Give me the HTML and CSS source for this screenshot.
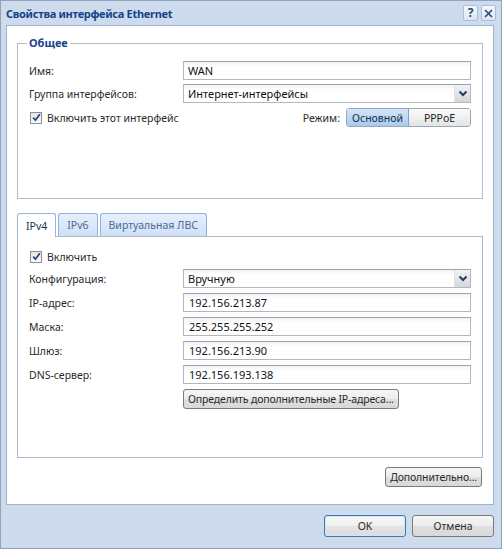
FILE: index.html
```html
<!DOCTYPE html>
<html lang="ru">
<head>
<meta charset="utf-8">
<title>Свойства интерфейса Ethernet</title>
<link rel="stylesheet" href="styles.css">
</head>
<body>
<div class="dialog">
  <div class="titlebar">
    <span class="title">Свойства интерфейса Ethernet</span>
    <div class="tools">
      <span class="tool">?</span>
      <span class="tool"><svg width="11" height="11" viewBox="0 0 11 11"><path d="M2 2 L9 9 M9 2 L2 9" stroke="#2a4a78" stroke-width="1.6" fill="none"/></svg></span>
    </div>
  </div>
  <div class="panel">
    <fieldset class="group">
      <legend>Общее</legend>
      <div class="row">
        <span class="lbl">Имя:</span>
        <div class="field">WAN</div>
      </div>
      <div class="row">
        <span class="lbl">Группа интерфейсов:</span>
        <div class="field select">
          <span class="sel-text">Интернет-интерфейсы</span>
          <span class="arrow"><svg width="10" height="7" viewBox="0 0 10 7"><path d="M1.5 1.5 L5 5 L8.5 1.5" stroke="#1f3d6e" stroke-width="2" fill="none"/></svg></span>
        </div>
      </div>
      <div class="row row-mode">
        <span class="check"><svg width="9" height="9" viewBox="0 0 9 9"><path d="M1.2 4.6 L3.5 7.2 L7.8 1.2" stroke="#24427a" stroke-width="1.7" fill="none"/></svg></span>
        <span class="check-lbl">Включить этот интерфейс</span>
        <span class="mode-lbl">Режим:</span>
        <div class="seg">
          <span class="seg-btn active">Основной</span>
          <span class="seg-btn">PPPoE</span>
        </div>
      </div>
    </fieldset>

    <div class="tabs">
      <div class="tabstrip">
        <span class="tab active">IPv4</span>
        <span class="tab">IPv6</span>
        <span class="tab">Виртуальная ЛВС</span>
      </div>
      <div class="tabpanel">
        <div class="row">
          <span class="check"><svg width="9" height="9" viewBox="0 0 9 9"><path d="M1.2 4.6 L3.5 7.2 L7.8 1.2" stroke="#24427a" stroke-width="1.7" fill="none"/></svg></span>
          <span class="check-lbl">Включить</span>
        </div>
        <div class="row r-sel">
          <span class="lbl">Конфигурация:</span>
          <div class="field select">
            <span class="sel-text">Вручную</span>
            <span class="arrow"><svg width="10" height="7" viewBox="0 0 10 7"><path d="M1.5 1.5 L5 5 L8.5 1.5" stroke="#1f3d6e" stroke-width="2" fill="none"/></svg></span>
          </div>
        </div>
        <div class="row r-in">
          <span class="lbl">IP-адрес:</span>
          <div class="field ip">192.156.213.87</div>
        </div>
        <div class="row r-in">
          <span class="lbl">Маска:</span>
          <div class="field ip">255.255.255.252</div>
        </div>
        <div class="row r-in">
          <span class="lbl">Шлюз:</span>
          <div class="field ip">192.156.213.90</div>
        </div>
        <div class="row r-in">
          <span class="lbl">DNS-сервер:</span>
          <div class="field ip">192.156.193.138</div>
        </div>
        <div class="row r-btn">
          <span class="lbl"></span>
          <button class="btn btn-extra">Определить дополнительные IP-адреса...</button>
        </div>
      </div>
    </div>

    <div class="more-row">
      <button class="btn btn-more">Дополнительно...</button>
    </div>
  </div>
  <div class="footer">
    <button class="btn btn-foot ok">OK</button>
    <button class="btn btn-foot">Отмена</button>
  </div>
</div>
</body>
</html>
```

FILE: styles.css
```css
* { box-sizing: border-box; }

html, body {
  margin: 0;
  padding: 0;
  background: #cddbec;
}

body {
  font-family: "Noto Sans", "Open Sans", sans-serif;
  font-size: 10.5px;
  color: #2a2a2a;
}

.dialog {
  width: 502px;
  height: 549px;
  background: #cddbec;
  border: 1px solid #8fa3bd;
  display: flex;
  flex-direction: column;
}

.titlebar {
  height: 24px;
  display: flex;
  align-items: center;
  padding: 0 5px 0 5px;
}

.title {
  flex: 1;
  font-weight: bold;
  font-size: 11px;
  color: #15428b;
  letter-spacing: -0.3px;
}

.tools {
  display: flex;
  gap: 3px;
}

.tool {
  width: 15px;
  height: 16px;
  border: 1px solid #a9bfd9;
  border-radius: 2px;
  background: linear-gradient(#f5f8fc, #dbe6f3);
  color: #2a4a78;
  font-weight: bold;
  font-size: 12px;
  line-height: 14px;
  text-align: center;
  display: flex;
  align-items: center;
  justify-content: center;
}

.panel {
  margin-left: 5px;
  width: 488px;
  height: 480px;
  background: #fff;
  border: 1px solid #99b4d4;
  padding: 0 10px;
}

.group {
  margin: 9px 0 0 0;
  width: 466px;
  border: 1px solid #b7bbc6;
  padding: 10px 11px 71px 10px;
}

.group legend {
  font-weight: bold;
  font-size: 11px;
  line-height: 16px;
  color: #15428b;
  padding: 0 2px;
  margin-left: -1px;
}

.row {
  display: flex;
  align-items: center;
  height: 19px;
  margin-top: 4px;
  padding-left: 1px;
}

.row:first-of-type { margin-top: 0; }

.lbl {
  width: 154px;
  flex: none;
}

.field {
  flex: 1;
  height: 19px;
  border: 1px solid #b3b7bf;
  border-top-color: #9ea2aa;
  background: linear-gradient(#f3f3f3, #ffffff 5px);
  padding: 0 4px;
  display: flex;
  align-items: center;
  font-size: 11px;
  color: #111;
}

.field.ip { padding-left: 5px; }

.select {
  padding-right: 0;
}

.sel-text { flex: 1; }

.arrow {
  width: 16px;
  height: 17px;
  background: linear-gradient(#f2f2f2, #d6d6d6);
  border-left: 1px solid #e0e0e0;
  display: flex;
  align-items: center;
  justify-content: center;
}

.row-mode {
  margin-top: 5px;
}

.check {
  width: 12px;
  height: 12px;
  flex: none;
  border: 1px solid #8e8f8f;
  background: linear-gradient(#e6e6e6, #fbfbfb);
  display: flex;
  align-items: center;
  justify-content: center;
  margin-left: 1px;
  margin-right: 5px;
}

.check-lbl { flex: 1; }

.mode-lbl {
  margin-right: 6px;
}

.seg {
  display: flex;
  height: 19px;
  width: 125px;
  border: 1px solid #9aa6b6;
  border-radius: 3px;
  overflow: hidden;
}

.seg-btn {
  flex: 1;
  display: flex;
  align-items: center;
  justify-content: center;
  background: linear-gradient(#fbfbfb, #e4e4e4);
  color: #222;
}

.seg-btn.active {
  background: linear-gradient(#d3e6f9, #a7cbee);
  border-right: 1px solid #7fa3cc;
  color: #1b2c48;
}

.tabs {
  margin-top: 14px;
  width: 466px;
}

.tabstrip {
  display: flex;
  gap: 2px;
  height: 23px;
  align-items: flex-end;
}

.tab {
  height: 23px;
  padding: 0 8px;
  border: 1px solid #8db2e3;
  border-bottom: none;
  border-radius: 3px 3px 0 0;
  background: linear-gradient(#e6f0fc, #cfe0f5);
  color: #4a6b9b;
  display: flex;
  align-items: center;
  position: relative;
}

.tab.active {
  background: #fff;
  color: #1d2f4f;
  height: 24px;
  margin-bottom: -1px;
  z-index: 1;
  border-color: #99b4d4;
}

.tabpanel {
  height: 222px;
  border: 1px solid #a9b9cd;
  padding: 10px 11px 0 10px;
}

.tabpanel .row:first-child { margin-top: 0; }
.tabpanel .r-sel { margin-top: 3px; }
.tabpanel .r-in { margin-top: 5px; }
.tabpanel .r-btn { margin-top: 5px; height: 20px; }

.btn {
  font-family: "Noto Sans", "Open Sans", sans-serif;
  font-size: 10.5px;
  color: #2a2a2a;
  border: 1px solid #7a7a7a;
  border-radius: 3px;
  background: linear-gradient(#f6f6f6 0%, #ececec 50%, #e0e0e0 51%, #d8d8d8 100%);
  padding: 0 4px;
  height: 20px;
  margin: 0;
  white-space: nowrap;
  letter-spacing: -0.15px;
}

.btn-extra {
  height: 20px;
}

.more-row {
  display: flex;
  justify-content: flex-end;
  margin-top: 9px;
  padding-right: 1px;
}

.footer {
  display: flex;
  justify-content: flex-end;
  gap: 6px;
  padding: 10px 7px 0 0;
}

.btn-foot {
  width: 82px;
  height: 22px;
  letter-spacing: 0;
}

.btn.ok {
  border-color: #3d7bad;
  box-shadow: inset 0 0 0 1px #cfe8f8;
  background: linear-gradient(#f7f7f7 0%, #efefef 50%, #e4e4e4 51%, #dcdcdc 100%);
}
```
